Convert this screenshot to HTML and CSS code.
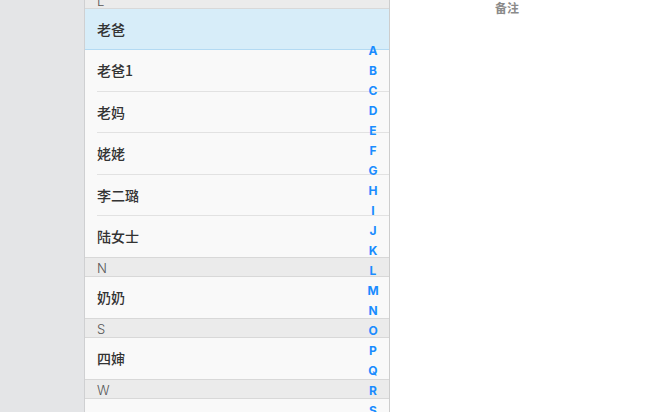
FILE: index.html
```html
<!DOCTYPE html>
<html lang="zh">
<head>
<meta charset="utf-8">
<title>联系人</title>
<link rel="stylesheet" href="styles.css">
</head>
<body>
<div class="app">
  <aside class="sidebar"></aside>
  <section class="panel">
    <div class="list">
      <div class="group-title">L</div>
      <div class="row selected">老爸</div>
      <div class="row">老爸1</div>
      <div class="row">老妈</div>
      <div class="row">姥姥</div>
      <div class="row">李二璐</div>
      <div class="row last">陆女士</div>
      <div class="group-title">N</div>
      <div class="row last">奶奶</div>
      <div class="group-title">S</div>
      <div class="row last">四婶</div>
      <div class="group-title">W</div>
      <div class="row last">王叔叔</div>
    </div>
    <nav class="index">
      <span>A</span><span>B</span><span>C</span><span>D</span><span>E</span>
      <span>F</span><span>G</span><span>H</span><span>I</span><span>J</span>
      <span>K</span><span>L</span><span>M</span><span>N</span><span>O</span>
      <span>P</span><span>Q</span><span>R</span><span>S</span><span>T</span>
    </nav>
  </section>
  <main class="detail">
    <div class="detail-head"><span class="note-label">备注</span></div>
  </main>
</div>
</body>
</html>
```
FILE: styles.css
```css
html, body {
  margin: 0;
  padding: 0;
  height: 100%;
  overflow: hidden;
}
body {
  font-family: "Inter", "Noto Sans CJK SC", "Noto Sans", sans-serif;
  background: #ffffff;
}
.app {
  display: flex;
  height: 412px;
}
.sidebar {
  width: 84px;
  flex: none;
  background: #e4e5e7;
  border-right: 1px solid #cfd0d2;
}
.panel {
  width: 304px;
  flex: none;
  position: relative;
  overflow: hidden;
  background: #f9f9f9;
  border-right: 1px solid #cdcdcd;
}
.list {
  margin-top: -10.5px;
}
.group-title {
  box-sizing: border-box;
  height: 19.5px;
  line-height: 17.5px;
  padding-top: 2px;
  padding-left: 12px;
  background: #ebebeb;
  border-top: 1px solid #d8d8d8;
  border-bottom: 1px solid #d8d8d8;
  font-size: 13px;
  font-weight: 300;
  color: #555555;
  overflow: hidden;
}
.row {
  position: relative;
  box-sizing: border-box;
  height: 41.4px;
  line-height: 41.4px;
  padding-left: 12px;
  font-family: "Noto Sans CJK SC", "Inter", sans-serif;
  font-size: 14px;
  font-weight: 500;
  color: #333333;
}
.row::after {
  content: "";
  position: absolute;
  left: 12px;
  right: 0;
  bottom: 0;
  height: 1px;
  background: #e2e2e2;
}
.row.last::after {
  display: none;
}
.row.selected {
  background: #d7edf9;
}
.row.selected::after {
  left: 0;
  background: #b3daf3;
}
.index {
  position: absolute;
  top: 41px;
  left: 278px;
  width: 20px;
  display: flex;
  flex-direction: column;
  align-items: center;
}
.index span {
  height: 20px;
  line-height: 20px;
  font-family: "Inter", "Roboto", sans-serif;
  font-size: 12px;
  font-weight: 700;
  color: #1a8cff;
}
.detail {
  flex: 1;
  background: #ffffff;
}
.detail-head {
  display: flex;
  padding-left: 105px;
}
.note-label {
  font-family: "Noto Sans CJK SC", sans-serif;
  font-size: 12px;
  line-height: 16px;
  font-weight: 700;
  color: #8a8a8a;
}
```
